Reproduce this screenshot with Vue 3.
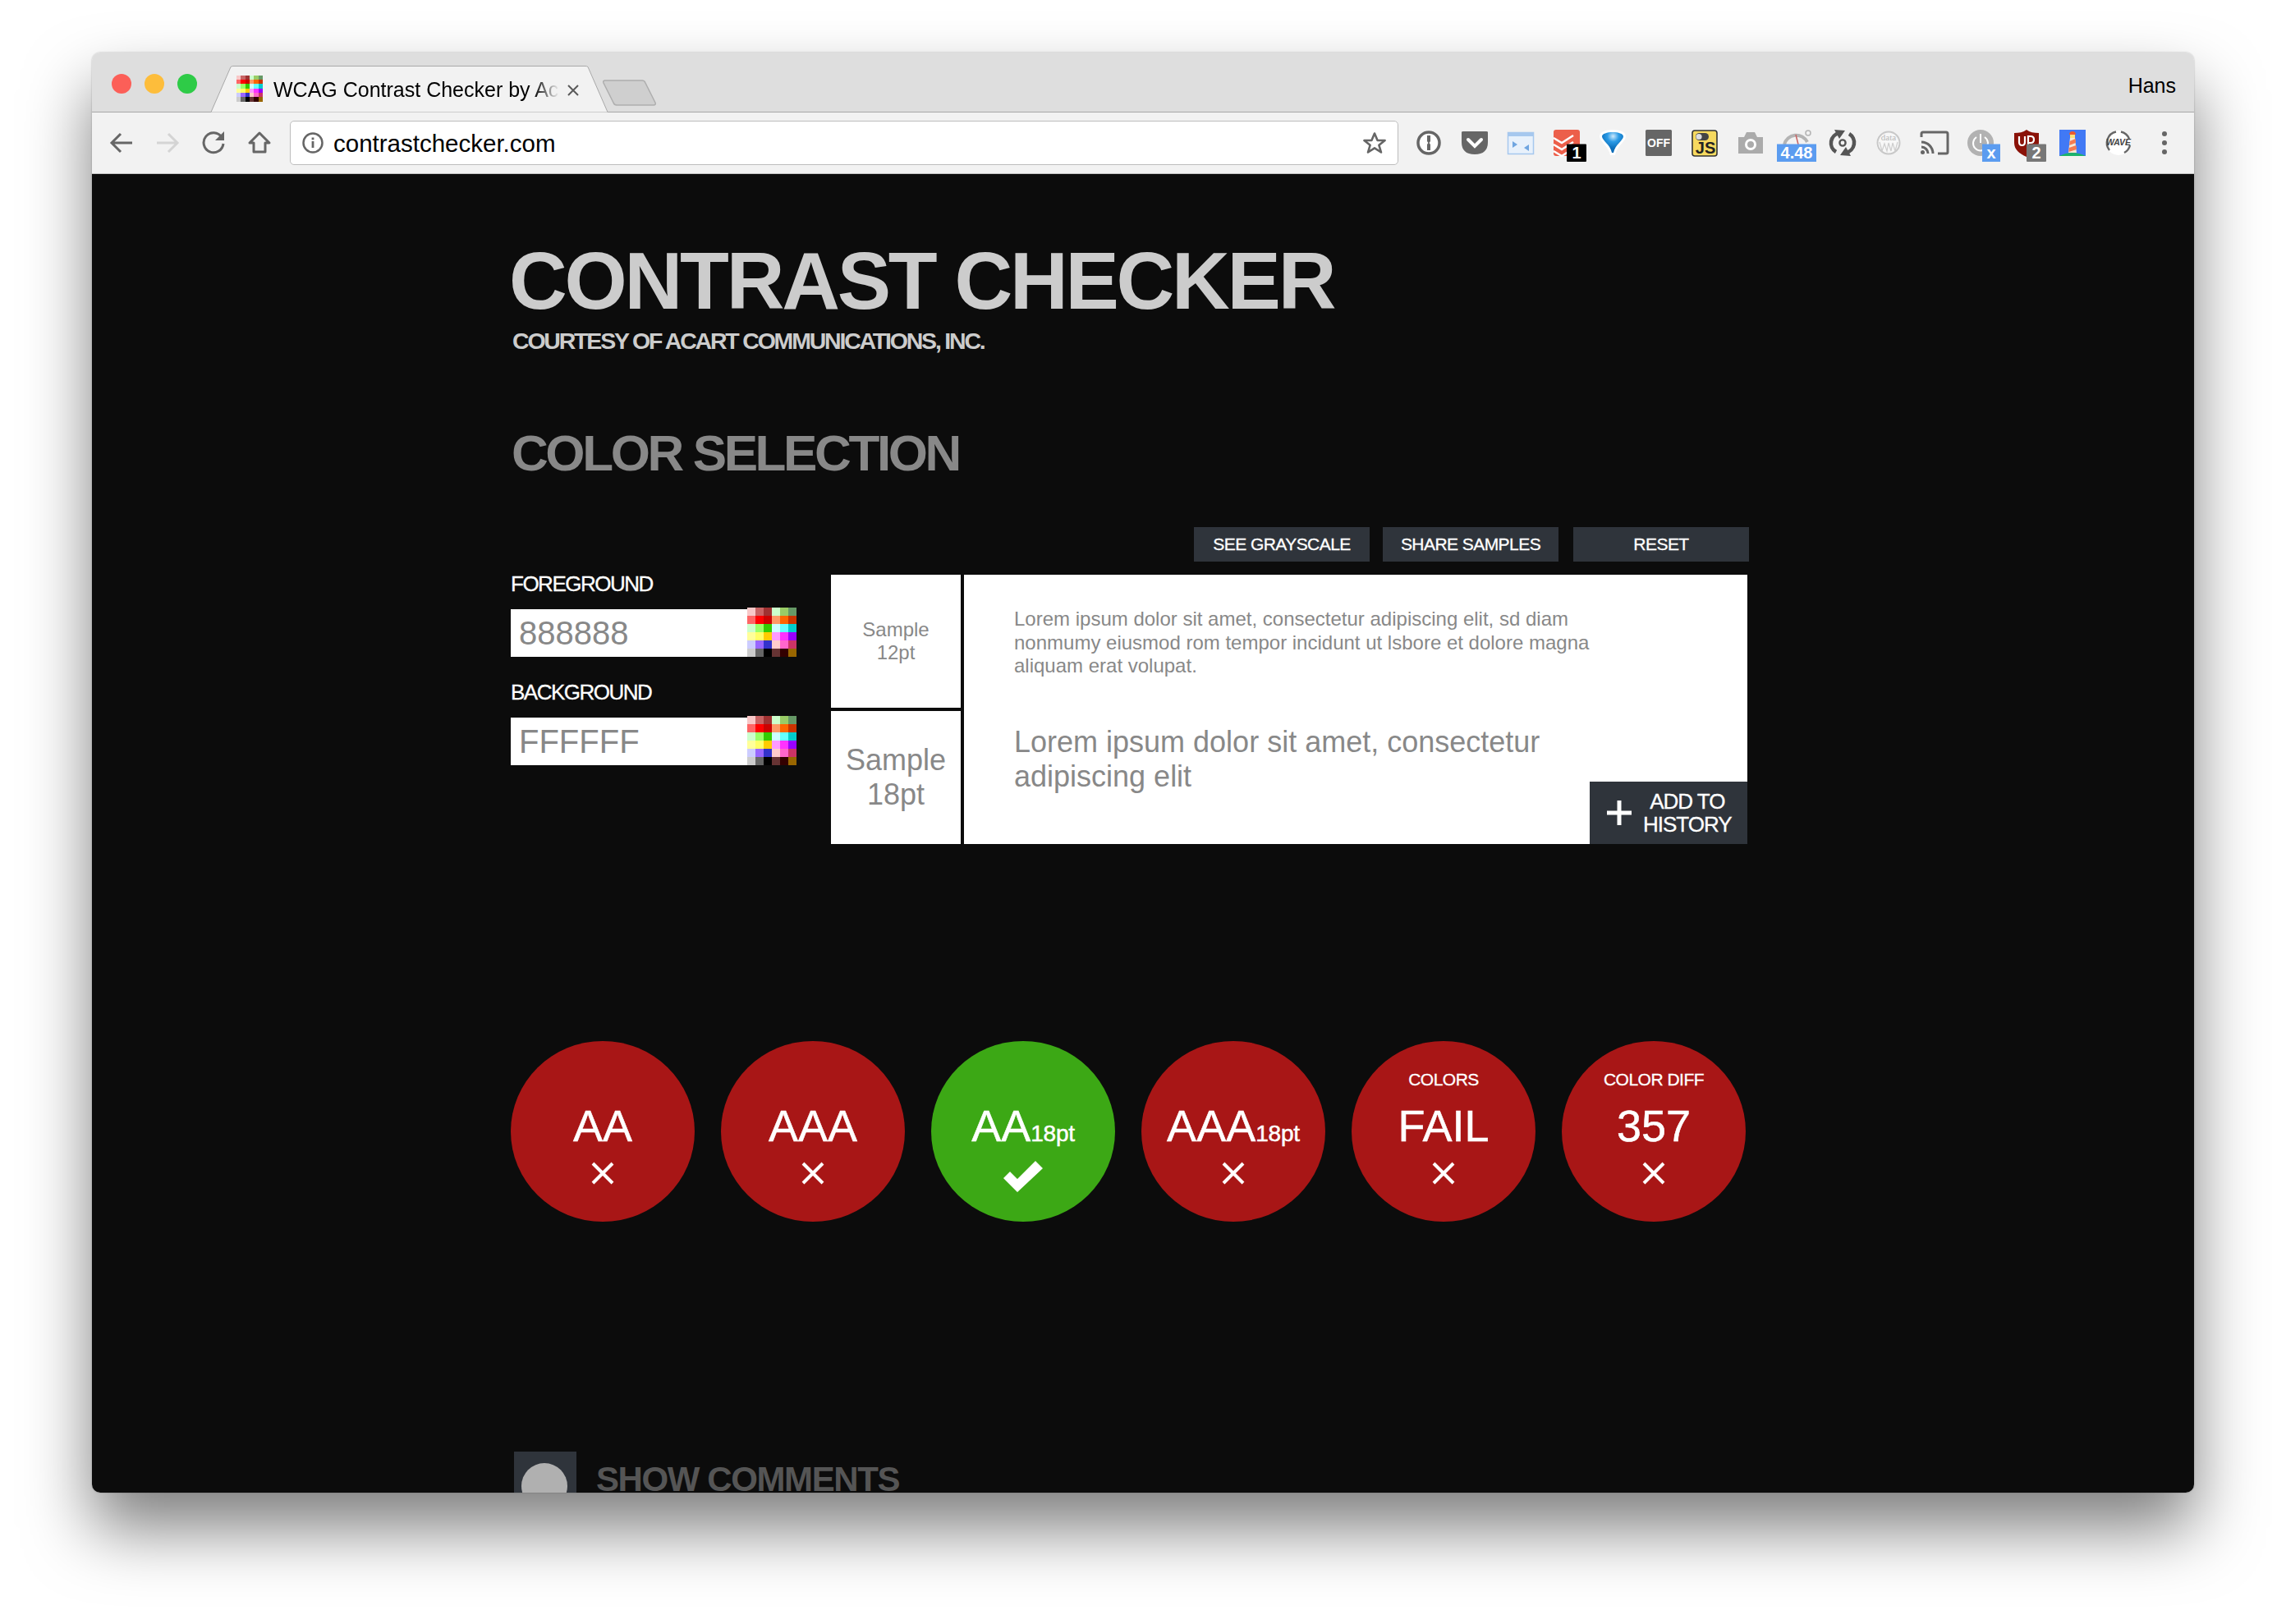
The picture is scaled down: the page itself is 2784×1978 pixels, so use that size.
<script setup>
const swatch = [
  '#f8c8c8', '#c86464', '#a03232', '#ccffcc', '#99cc66', '#669966',
  '#ff6666', '#ff0000', '#cc0000', '#ff9966', '#ff6600', '#cc3300',
  '#ccffcc', '#99ff66', '#33cc00', '#ccffff', '#66ffff', '#00cccc',
  '#ffff99', '#ffff66', '#ffcc00', '#ff99ff', '#ff33ff', '#9900ff',
  '#ccccff', '#9966ff', '#3333cc', '#ffcccc', '#ff66cc', '#cc3366',
  '#cccccc', '#666666', '#000000', '#663333', '#330000', '#996600'
]

const fields = [
  { label: 'FOREGROUND', value: '888888' },
  { label: 'BACKGROUND', value: 'FFFFFF' }
]

const results = [
  { main: 'AA' },
  { main: 'AAA' },
  { main: 'AA', small: '18pt', pass: true },
  { main: 'AAA', small: '18pt' },
  { label: 'COLORS', main: 'FAIL' },
  { label: 'COLOR DIFF', main: '357' }
]
</script>

<template>
  <div class="window">
    <header class="tabstrip">
      <div class="lights">
        <span class="light red"></span>
        <span class="light yellow"></span>
        <span class="light green"></span>
      </div>
      <div class="tab">
        <svg class="tab-bg" width="486" height="57" viewBox="0 0 486 57">
          <path d="M0 56.5 H1 L25 1.5 Q26 .5 28 .5 H457 Q459 .5 460 1.5 L484 56.5 H486" fill="#f2f2f2" stroke="#a8a8a8" />
        </svg>
        <div class="swatch favicon">
          <i v-for="(c, i) in swatch" :key="i" :style="{ background: c }"></i>
        </div>
        <span class="tab-title">WCAG Contrast Checker by Ac</span>
        <svg class="tab-close" width="16" height="16" viewBox="0 0 16 16">
          <path d="M2 2 L14 14 M14 2 L2 14" stroke="#5a5a5a" stroke-width="2" />
        </svg>
      </div>
      <svg class="newtab" width="66" height="33" viewBox="0 0 66 33">
        <path d="M3 1 H48 Q51 1 52 4 L64 28 Q65 31 62 31 H17 Q14 31 13 28 L1 4 Q0 1 3 1 Z" fill="#cfcfcf" stroke="#aeaeae" stroke-width="1.5" />
      </svg>
      <span class="user">Hans</span>
    </header>

    <div class="toolbar">
      <div class="nav">
        <svg class="cell" viewBox="0 0 56 56"><path d="M41 28 H17 M27 17 L16 28 L27 39" fill="none" stroke="#666" stroke-width="3" /></svg>
        <svg class="cell" viewBox="0 0 56 56"><path d="M15 28 H39 M29 17 L40 28 L29 39" fill="none" stroke="#d4d4d4" stroke-width="3" /></svg>
        <svg class="cell" viewBox="0 0 56 56">
          <path d="M38 21 A12 12 0 1 0 40 29" fill="none" stroke="#666" stroke-width="3" />
          <path d="M41 14 V25 H30 Z" fill="#666" />
        </svg>
        <svg class="cell" viewBox="0 0 56 56"><path d="M28 16 L40 28 H35 V39 H21 V28 H16 Z" fill="none" stroke="#666" stroke-width="3" stroke-linejoin="round" /></svg>
      </div>

      <div class="address">
        <svg width="26" height="26" viewBox="0 0 26 26">
          <circle cx="13" cy="13" r="11.5" fill="none" stroke="#666" stroke-width="2.5" />
          <rect x="11.6" y="11" width="2.8" height="8" fill="#666" />
          <rect x="11.6" y="6.5" width="2.8" height="2.8" fill="#666" />
        </svg>
        <span class="url">contrastchecker.com</span>
        <svg class="star" width="30" height="28" viewBox="0 0 30 28">
          <path d="M15 2.5 L18.6 11 H27.6 L20.4 16.8 L23 25.5 L15 20.4 L7 25.5 L9.6 16.8 L2.4 11 H11.4 Z" fill="none" stroke="#666" stroke-width="2.6" stroke-linejoin="round" />
        </svg>
      </div>

      <div class="extensions">
        <!-- 1password -->
        <svg class="cell" viewBox="0 0 56 56">
          <circle cx="28" cy="28" r="13" fill="#fff" stroke="#666" stroke-width="3.5" />
          <path d="M26 19 H30 V26 L28.6 28 L30 30 V37 H26 V30 L27.4 28 L26 26 Z" fill="#666" />
        </svg>
        <!-- pocket -->
        <svg class="cell" viewBox="0 0 56 56">
          <path d="M12 15 Q12 14 14 14 H42 Q44 14 44 15 V27 Q44 42 28 42 Q12 42 12 27 Z" fill="#666" />
          <path d="M20 24 L28 32 L36 24" fill="none" stroke="#fff" stroke-width="4" stroke-linecap="round" />
        </svg>
        <!-- window -->
        <svg class="cell" viewBox="0 0 56 56">
          <rect x="12.5" y="15.5" width="31" height="26" fill="#e8f1fb" stroke="#a6c8ee" stroke-width="1.5" />
          <rect x="12" y="15" width="32" height="5" fill="#a6c8ee" />
          <path d="M18 26 L24 30 L18 34 Z M38 30 L32 34 L38 38 Z" fill="#6fa5e0" />
        </svg>
        <!-- todoist -->
        <svg class="cell" viewBox="0 0 56 56">
          <rect x="12" y="12" width="32" height="32" rx="3" fill="#ec5f4a" />
          <path d="M12 22 L22 28 L36 19 M12 30 L22 36 L36 27 M12 38 L22 44 L36 35" fill="none" stroke="#fff" stroke-width="2.6" />
          <rect x="28" y="29.5" width="24" height="21.5" rx="1" fill="#000" />
          <text x="40" y="47" class="badge-text" text-anchor="middle">1</text>
        </svg>
        <!-- balloon -->
        <svg class="cell" viewBox="0 0 56 56">
          <defs>
            <radialGradient id="balloon" cx="0.52" cy="0.2" r="0.6">
              <stop offset="0" stop-color="#cfe9fb" />
              <stop offset="0.45" stop-color="#2b9be6" />
              <stop offset="1" stop-color="#0a6cb8" />
            </radialGradient>
          </defs>
          <path d="M28 12 C37 12 44 15 44 20 C44 26 33 32 31 43 H25 C23 32 12 26 12 20 C12 15 19 12 28 12 Z" fill="#fff" />
          <path d="M28 15 C35 15 41 17 41 20 C41 25 31 30 29 40 H27 C25 30 15 25 15 20 C15 17 21 15 28 15 Z" fill="url(#balloon)" />
        </svg>
        <!-- off -->
        <svg class="cell" viewBox="0 0 56 56">
          <rect x="12" y="12" width="32" height="32" rx="1.5" fill="#666" />
          <text x="28" y="33" class="off-text" text-anchor="middle">OFF</text>
        </svg>
        <!-- js -->
        <svg class="cell" viewBox="0 0 56 56">
          <rect x="13" y="13" width="30" height="31" rx="3" fill="#f6d95f" stroke="#333" stroke-width="1.6" />
          <rect x="17" y="16" width="16" height="9" rx="4.5" fill="#444" />
          <circle cx="21" cy="20.5" r="3.6" fill="#ddd" />
          <text x="29" y="41" class="js-text" text-anchor="middle">JS</text>
        </svg>
        <!-- camera -->
        <svg class="cell" viewBox="0 0 56 56">
          <path d="M13 21 H20 L23 15 H33 L36 21 H43 V41 H13 Z" fill="#ababab" />
          <circle cx="28" cy="30" r="7" fill="#fff" />
          <circle cx="28" cy="30" r="4" fill="#ababab" />
        </svg>
        <!-- gauge -->
        <svg class="cell" viewBox="0 0 56 56">
          <path d="M13 30 A15 15 0 0 1 41 27" fill="none" stroke="#b4b4b4" stroke-width="4" />
          <circle cx="42" cy="16" r="3" fill="none" stroke="#b4b4b4" stroke-width="1.5" />
          <path d="M27 18 L30 30" stroke="#c86464" stroke-width="1.5" />
          <rect x="4" y="29.5" width="48" height="21.5" fill="#5b9cf0" />
          <text x="28" y="46.5" class="badge-text" text-anchor="middle">4.48</text>
        </svg>
        <!-- sync -->
        <svg class="cell" viewBox="0 0 56 56">
          <path d="M24 16 A12.5 12.5 0 0 0 20 39 M32 40 A12.5 12.5 0 0 0 36 17" fill="none" stroke="#555" stroke-width="4.5" />
          <path d="M18 12 L31 13 L24 23 Z M38 44 L25 43 L32 33 Z" fill="#555" />
          <circle cx="28" cy="28" r="3.6" fill="none" stroke="#555" stroke-width="2.4" />
        </svg>
        <!-- data -->
        <svg class="cell" viewBox="0 0 56 56">
          <circle cx="28" cy="28" r="13.5" fill="#f7f7f7" stroke="#c8c8c8" stroke-width="2" />
          <text x="28" y="25" class="data-text" text-anchor="middle">data</text>
          <path d="M17 27 L20 38 L23 29 L26 38 L28 28 L31 38 L33 28 L36 38 L39 27" fill="none" stroke="#cdcdcd" stroke-width="1.2" />
        </svg>
        <!-- cast -->
        <svg class="cell" viewBox="0 0 56 56">
          <path d="M12 21 V17 Q12 15 14 15 H42 Q44 15 44 17 V39 Q44 41 42 41 H32" fill="none" stroke="#666" stroke-width="3" />
          <path d="M12 27 A14 14 0 0 1 26 41 M12 33 A8 8 0 0 1 20 41" fill="none" stroke="#666" stroke-width="3" />
          <circle cx="13.5" cy="39.5" r="2.5" fill="#666" />
        </svg>
        <!-- power -->
        <svg class="cell" viewBox="0 0 56 56">
          <circle cx="28" cy="28" r="16" fill="#b2b2b2" />
          <path d="M23 21 A9 9 0 1 0 33 21" fill="none" stroke="#fff" stroke-width="2" />
          <path d="M28 17 V28" stroke="#fff" stroke-width="2" />
          <rect x="30" y="29.5" width="22" height="21.5" fill="#5b9cf0" />
          <text x="41" y="46.5" class="badge-text" text-anchor="middle">x</text>
        </svg>
        <!-- ublock -->
        <svg class="cell" viewBox="0 0 56 56">
          <path d="M28 12 C32 15 37 16 43 16 V28 C43 36 37 41 28 45 C19 41 13 36 13 28 V16 C19 16 24 15 28 12 Z" fill="#8a1208" />
          <path d="M19 20 V27 Q19 31 22.5 31 Q26 31 26 27 V20" fill="none" stroke="#fff" stroke-width="2.2" />
          <path d="M30 30 V20 H33 Q37 20 37 24 Q37 28 33 28 H30" fill="none" stroke="#fff" stroke-width="2.2" />
          <rect x="28" y="29.5" width="24" height="21.5" rx="1" fill="#777" />
          <text x="40" y="47" class="badge-text" text-anchor="middle">2</text>
        </svg>
        <!-- lighthouse -->
        <svg class="cell" viewBox="0 0 56 56">
          <rect x="12" y="12" width="32" height="32" fill="#4179f5" />
          <path d="M12 44 Q28 36 44 44 Z" fill="#1cb36b" />
          <path d="M25 22 H31 L33 40 H23 Z" fill="#f4e7d4" />
          <path d="M24.6 26 L31.6 23 L32 28 L24.2 31 Z M23.8 34 L32.4 31 L33 36 L23.4 39 Z" fill="#f47b50" />
          <rect x="25" y="18" width="6" height="4" fill="#fbe27a" />
          <path d="M24 18 Q24 14 28 14 Q32 14 32 18 Z" fill="#ea5a2f" />
        </svg>
        <!-- wave -->
        <svg class="cell" viewBox="0 0 56 56">
          <circle cx="28" cy="28" r="15" fill="#fff" />
          <path d="M17 37 A14 14 0 0 1 25 14.5 M31 14.5 A14 14 0 0 1 41 23 M42 31 A14 14 0 0 1 35 40" fill="none" stroke="#666" stroke-width="2.4" />
          <text x="28" y="31" class="wave-text" text-anchor="middle">WAVE</text>
        </svg>
        <!-- menu -->
        <svg class="cell" viewBox="0 0 56 56">
          <circle cx="28" cy="17" r="3" fill="#666" />
          <circle cx="28" cy="28" r="3" fill="#666" />
          <circle cx="28" cy="39" r="3" fill="#666" />
        </svg>
      </div>
    </div>

    <main class="page">
      <h1 class="title">CONTRAST CHECKER</h1>
      <p class="subtitle">COURTESY OF ACART COMMUNICATIONS, INC.</p>
      <h2 class="section">COLOR SELECTION</h2>

      <div class="actions">
        <button class="btn">SEE GRAYSCALE</button>
        <button class="btn">SHARE SAMPLES</button>
        <button class="btn reset">RESET</button>
      </div>

      <div class="selection">
        <div class="fields">
          <div v-for="f in fields" :key="f.label" class="field">
            <label class="field-label">{{ f.label }}</label>
            <div class="field-row">
              <div class="field-input">{{ f.value }}</div>
              <div class="swatch picker">
                <i v-for="(c, i) in swatch" :key="i" :style="{ background: c }"></i>
              </div>
            </div>
          </div>
        </div>

        <div class="samples">
          <div class="sample-names">
            <div class="sample-name">Sample<br />12pt</div>
            <div class="sample-name big">Sample<br />18pt</div>
          </div>
          <div class="sample-text">
            <p class="lorem">Lorem ipsum dolor sit amet, consectetur adipiscing elit, sd diam nonmumy eiusmod rom tempor incidunt ut lsbore et dolore magna aliquam erat volupat.</p>
            <p class="lorem big">Lorem ipsum dolor sit amet, consectetur adipiscing elit</p>
            <button class="add">
              <svg width="30" height="30" viewBox="0 0 30 30"><path d="M15 0 V30 M0 15 H30" stroke="#fff" stroke-width="5" /></svg>
              <span>ADD TO<br />HISTORY</span>
            </button>
          </div>
        </div>
      </div>

      <div class="results">
        <div v-for="(r, i) in results" :key="i" class="result" :class="{ pass: r.pass }">
          <div class="result-label">{{ r.label }}</div>
          <div class="result-main">{{ r.main }}<small v-if="r.small">{{ r.small }}</small></div>
          <svg v-if="r.pass" class="mark-check" width="48" height="38" viewBox="0 0 48 38">
            <path d="M0 21 L8 13 L17 22 L39 0 L48 9 L17 38 Z" fill="#fff" />
          </svg>
          <svg v-else class="mark-x" width="28" height="28" viewBox="0 0 28 28">
            <path d="M2 2 L26 26 M26 2 L2 26" stroke="#fff" stroke-width="4" />
          </svg>
        </div>
      </div>

      <div class="comments">
        <div class="toggle"><span class="knob"></span></div>
        <span class="comments-text">SHOW COMMENTS</span>
      </div>
    </main>
  </div>
</template>

<style scoped>
.window {
  display: flex;
  flex-direction: column;
  width: 2560px;
  height: 1754px;
  margin: 64px 112px 160px;
  border-radius: 10px;
  overflow: hidden;
  box-shadow: 0 44px 80px rgba(0, 0, 0, 0.5), 0 0 2px rgba(0, 0, 0, 0.3);
  font-family: "Liberation Sans", Arial, sans-serif;
}

/* browser chrome */
.tabstrip {
  flex: none;
  display: flex;
  align-items: flex-start;
  height: 73px;
  box-sizing: border-box;
  background: #dedede;
  border-bottom: 1px solid #a8a8a8;
}
.lights {
  display: flex;
  gap: 16px;
  padding: 26px 0 0 24px;
  width: 144px;
  box-sizing: border-box;
}
.light {
  width: 24px;
  height: 24px;
  border-radius: 50%;
}
.light.red { background: #fc5f58; }
.light.yellow { background: #fdbd3b; }
.light.green { background: #2ecb47; }

.tab {
  position: relative;
  display: flex;
  align-items: center;
  width: 486px;
  height: 57px;
  margin-top: 16px;
  padding-left: 32px;
  box-sizing: border-box;
  flex: none;
}
.tab-bg {
  position: absolute;
  left: 0;
  top: 0;
}
.tab .favicon {
  position: relative;
  width: 32px;
  height: 32px;
  margin-top: -2px;
}
.tab-title {
  position: relative;
  width: 348px;
  margin-left: 13px;
  padding-top: 2px;
  overflow: hidden;
  white-space: nowrap;
  font-size: 25px;
  color: #000;
  -webkit-mask-image: linear-gradient(to right, #000 91%, transparent);
  mask-image: linear-gradient(to right, #000 91%, transparent);
}
.tab-close {
  position: relative;
  margin-left: 9px;
  margin-top: 2px;
}
.newtab {
  flex: none;
  margin: 33px 0 0 -8px;
}
.user {
  margin-left: auto;
  padding: 25px 22px 0 0;
  font-size: 25px;
  line-height: 30px;
  color: #000;
}

.toolbar {
  flex: none;
  display: flex;
  align-items: center;
  height: 75px;
  box-sizing: border-box;
  padding-left: 8px;
  background: #f2f2f2;
  border-bottom: 1px solid #c4c4c4;
}
.nav,
.extensions {
  display: flex;
  flex: none;
}
.cell {
  flex: none;
  width: 56px;
  height: 56px;
}
.address {
  flex: none;
  display: flex;
  align-items: center;
  width: 1350px;
  height: 54px;
  box-sizing: border-box;
  margin-left: 9px;
  padding: 0 13px 0 14px;
  background: #fff;
  border: 1px solid #bdbdbd;
  border-radius: 5px;
}
.url {
  margin: 2px 0 0 12px;
  font-size: 29.5px;
  color: #000;
}
.star {
  margin-left: auto;
}
.extensions {
  margin-left: 9px;
}
svg text {
  font-family: "Liberation Sans", Arial, sans-serif;
}
.badge-text {
  font-size: 20px;
  font-weight: 700;
  fill: #fff;
}
.off-text {
  font-size: 14px;
  font-weight: 700;
  fill: #fff;
}
.js-text {
  font-size: 20px;
  font-weight: 700;
  fill: #222;
}
.data-text {
  font-family: "Liberation Serif", serif;
  font-size: 11px;
  fill: #b8b8b8;
}
.wave-text {
  font-size: 10.5px;
  font-weight: 700;
  font-style: italic;
  fill: #444;
}

/* page */
.page {
  flex: 1;
  min-height: 0;
  overflow: hidden;
  box-sizing: border-box;
  padding: 82px 542px 0 510px;
  background: #0c0c0c;
}
.title {
  margin: 0 0 0 -2px;
  font-size: 98px;
  line-height: 96px;
  font-weight: 700;
  letter-spacing: -3.25px;
  color: #ccc;
}
.subtitle {
  margin: 9px 0 0 2px;
  font-size: 28.5px;
  line-height: 32px;
  font-weight: 700;
  letter-spacing: -2.2px;
  color: #ccc;
}
.section {
  margin: 86px 0 0 1px;
  font-size: 62px;
  line-height: 70px;
  font-weight: 700;
  letter-spacing: -3.4px;
  color: #888;
}

.actions {
  display: flex;
  justify-content: flex-end;
  gap: 16px;
  margin-top: 55px;
}
.btn {
  width: 214px;
  height: 42px;
  padding: 0;
  border: 0;
  background: #2f343b;
  color: #fff;
  font: 21px "Liberation Sans", Arial, sans-serif;
  letter-spacing: -0.55px;
  -webkit-text-stroke: 0.3px #fff;
}
.btn.reset { margin-left: 2px; }

.selection {
  display: flex;
  margin-top: 16px;
}
.fields {
  flex: none;
  width: 390px;
}
.field { margin-bottom: 32px; }
.field-label {
  display: block;
  height: 42px;
  margin-top: -1px;
  margin-bottom: 1px;
  font-size: 26px;
  line-height: 24px;
  letter-spacing: -1.5px;
  color: #fff;
  -webkit-text-stroke: 0.3px #fff;
}
.field-row {
  display: flex;
  align-items: flex-end;
  width: 348px;
  height: 60px;
  margin-top: -2px;
}
.field-input {
  flex: 1;
  height: 58px;
  box-sizing: border-box;
  padding-left: 10px;
  background: #fff;
  color: #888;
  font-size: 40px;
  line-height: 58px;
}
.swatch {
  display: grid;
  grid-template-columns: repeat(6, 1fr);
  grid-template-rows: repeat(6, 1fr);
}
.swatch i { display: block; }
.picker {
  flex: none;
  width: 60px;
  height: 60px;
  filter: blur(0.6px);
}

.samples {
  flex: none;
  display: flex;
  gap: 4px;
  width: 1116px;
  height: 328px;
}
.sample-names {
  flex: none;
  display: flex;
  flex-direction: column;
  gap: 4px;
  width: 158px;
}
.sample-name {
  flex: 1;
  display: flex;
  align-items: center;
  justify-content: center;
  text-align: center;
  background: #fff;
  color: #888;
  font-size: 24px;
  line-height: 28px;
}
.sample-name.big {
  font-size: 36px;
  line-height: 42px;
}
.sample-text {
  flex: 1;
  position: relative;
  box-sizing: border-box;
  padding: 40px 60px 0 61px;
  background: #fff;
}
.lorem {
  margin: 0;
  color: #888;
  font-size: 24px;
  line-height: 28.5px;
  width: 720px;
}
.lorem.big {
  margin-top: 57px;
  width: 720px;
  font-size: 36px;
  line-height: 42px;
}
.add {
  position: absolute;
  right: 0;
  bottom: 0;
  display: flex;
  align-items: center;
  gap: 14px;
  width: 192px;
  height: 76px;
  box-sizing: border-box;
  padding: 0 0 0 21px;
  border: 0;
  background: #2f343b;
  color: #fff;
  font: 26px/28px "Liberation Sans", Arial, sans-serif;
  letter-spacing: -1px;
  text-align: center;
  -webkit-text-stroke: 0.3px #fff;
}

.results {
  display: flex;
  gap: 32px;
  margin-top: 240px;
}
.result {
  flex: none;
  display: flex;
  flex-direction: column;
  align-items: center;
  width: 224px;
  height: 220px;
  box-sizing: border-box;
  padding-top: 31px;
  border-radius: 50%;
  background: #a81616;
  color: #fff;
}
.result.pass { background: #3ca815; }
.result-label {
  height: 32px;
  font-size: 21px;
  line-height: 32px;
  letter-spacing: -0.5px;
  -webkit-text-stroke: 0.3px #fff;
}
.result-main {
  height: 60px;
  margin-top: 10px;
  font-size: 54px;
  line-height: 60px;
  white-space: nowrap;
  -webkit-text-stroke: 0.5px #fff;
}
.result-main small {
  font-size: 28px;
  letter-spacing: -0.2px;
}
.mark-x { margin-top: 14px; }
.mark-check { margin-top: 13px; }

.comments {
  display: flex;
  align-items: flex-start;
  margin-top: 280px;
  padding-left: 4px;
}
.toggle {
  flex: none;
  width: 76px;
  height: 80px;
  padding: 14px 9px 0;
  box-sizing: border-box;
  background: #2f343b;
}
.knob {
  display: block;
  width: 56px;
  height: 56px;
  border-radius: 50%;
  background: #b0b0b0;
}
.comments-text {
  margin: 10px 0 0 24px;
  font-size: 42px;
  line-height: 48px;
  font-weight: 700;
  letter-spacing: -1.4px;
  color: #555;
}
</style>

<style>
html, body {
  background: #fff;
}
</style>
